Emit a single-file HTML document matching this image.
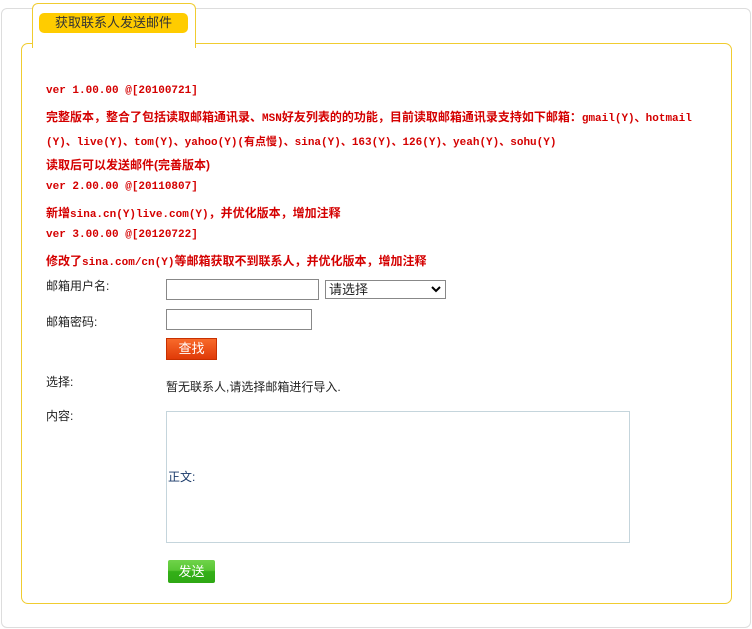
<!DOCTYPE html>
<html><head><meta charset="utf-8"><style>
body{margin:0;width:752px;height:629px;background:#fff;font-family:"Liberation Sans","Noto Sans CJK SC",sans-serif;font-size:12px;color:#222;position:relative;overflow:hidden}
.a{position:absolute}
.outer{left:1px;top:8px;width:748px;height:618px;border:1px solid #ddd;border-radius:6px}
.main{left:21px;top:43px;width:709px;height:559px;border:1px solid #f0cc30;border-radius:7px;background:#fff}
.tab{left:32px;top:3px;width:162px;height:44px;border:1px solid #f0cc30;border-bottom:none;border-radius:6px 6px 0 0;background:#fff}
.pill{left:39px;top:13px;width:149px;height:20px;background:#ffcc00;border-radius:5px;text-align:center;line-height:20px;font-size:13px;color:#333}
.r{left:46px;color:#d40000;font-weight:bold;font-family:"Liberation Mono","Noto Sans CJK SC",monospace;font-size:11px;white-space:nowrap}
.r.c{font-family:"Liberation Sans","Noto Sans CJK SC",sans-serif;font-size:12px}
.lbl{left:46px;font-size:12px}
.inp{border:1px solid #888;background:#fff}
</style></head><body>
<div class="a outer"></div>
<div class="a main"></div>
<div class="a tab"></div>
<div class="a pill">获取联系人发送邮件</div>
<div class="a r" style="top:85px">ver 1.00.00 @[20100721]</div>
<div class="a r c" style="top:108px">完整版本，整合了包括读取邮箱通讯录、<span style="font-family:'Liberation Mono',monospace;font-size:11px">MSN</span>好友列表的的功能，目前读取邮箱通讯录支持如下邮箱：<span style="font-family:'Liberation Mono',monospace;font-size:11px">gmail(Y)、hotmail</span></div>
<div class="a r" style="top:133px">(Y)、live(Y)、tom(Y)、yahoo(Y)(有点慢)、sina(Y)、163(Y)、126(Y)、yeah(Y)、sohu(Y)</div>
<div class="a r c" style="top:156px">读取后可以发送邮件(完善版本)</div>
<div class="a r" style="top:181px">ver 2.00.00 @[20110807]</div>
<div class="a r c" style="top:204px">新增<span style="font-family:'Liberation Mono',monospace;font-size:11px">sina.cn(Y)live.com(Y)</span>，并优化版本，增加注释</div>
<div class="a r" style="top:229px">ver 3.00.00 @[20120722]</div>
<div class="a r c" style="top:252px">修改了<span style="font-family:'Liberation Mono',monospace;font-size:11px">sina.com/cn(Y)</span>等邮箱获取不到联系人，并优化版本，增加注释</div>
<div class="a lbl" style="top:277px">邮箱用户名:</div>
<div class="a inp" style="left:166px;top:279px;width:151px;height:19px"></div>
<div class="a inp" style="left:325px;top:280px;font-size:13px;line-height:17px;padding-left:3px;box-sizing:border-box;width:121px;height:19px">请选择<svg style="position:absolute;right:4px;top:5px" width="10" height="7" viewBox="0 0 10 7"><path d="M1 1L5 5L9 1" stroke="#000" stroke-width="2" fill="none"/></svg></div>
<div class="a lbl" style="top:313px">邮箱密码:</div>
<div class="a inp" style="left:166px;top:309px;width:144px;height:19px"></div>
<div class="a" style="left:166px;top:338px;width:49px;height:20px;background:linear-gradient(#f86a2a,#e03a08);border:1px solid #c83000;color:#fff;font-size:13px;text-align:center;line-height:20px">查找</div>
<div class="a lbl" style="top:373px">选择:</div>
<div class="a" style="left:166px;top:378px">暂无联系人,请选择邮箱进行导入.</div>
<div class="a lbl" style="top:407px">内容:</div>
<div class="a" style="left:166px;top:411px;width:462px;height:130px;border:1px solid #c5d5dc"></div>
<div class="a" style="left:168px;top:468px;color:#1a3a6a">正文:</div>
<div class="a" style="left:168px;top:560px;width:47px;height:23px;background:linear-gradient(#6fd34a 0,#58c634 45%,#34b018 50%,#2ea814);border-radius:2px;color:#fff;font-size:13px;text-align:center;line-height:23px">发送</div>
</body></html>
